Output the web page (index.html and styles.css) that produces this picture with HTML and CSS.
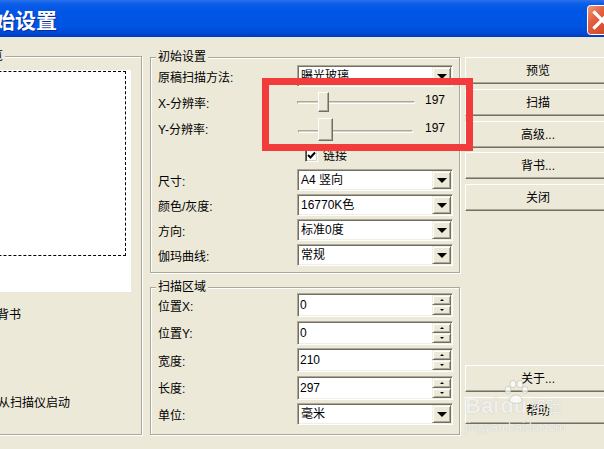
FILE: index.html
```html
<!DOCTYPE html>
<html lang="zh-CN">
<head>
<meta charset="utf-8">
<title>扫描设置</title>
<link rel="stylesheet" href="styles.css">
</head>
<body>
<div class="window">
  <div class="titlebar">
    <span class="title">始设置</span>
    <span class="close">
      <svg width="30" height="30" viewBox="0 0 30 30">
        <defs>
          <linearGradient id="cg" x1="0" y1="0" x2="1" y2="1">
            <stop offset="0" stop-color="#f09a80"/>
            <stop offset="0.35" stop-color="#e2603f"/>
            <stop offset="1" stop-color="#c2401f"/>
          </linearGradient>
        </defs>
        <rect x="0.5" y="0.5" width="29" height="29" rx="3" fill="url(#cg)" stroke="#ffffff"/>
        <path d="M7.5 7.5 L22.5 22.5 M22.5 7.5 L7.5 22.5" stroke="#ffffff" stroke-width="3.2" stroke-linecap="square"/>
      </svg>
    </span>
  </div>

  <div class="panes">
    <div class="group group-left">
      <span class="group-label label-left">预览</span>
      <div class="preview"><div class="marquee"></div></div>
      <div class="left-row row-endorse">背书</div>
      <div class="left-row row-start">从扫描仪启动</div>
    </div>

    <div class="middle">
      <div class="group group-init">
        <span class="group-label">初始设置</span>
        <div class="row row-first">
          <span class="lbl">原稿扫描方法:</span>
          <div class="field combo"><span class="val">曝光玻璃</span><span class="drop"><span class="tri"></span></span></div>
        </div>
        <div class="row row-slider-x">
          <span class="lbl">X-分辨率:</span>
          <div class="ctrl">
            <div class="slider slider-x"><span class="track"></span><span class="thumb thumb-x"></span></div>
            <span class="num num-x">197</span>
          </div>
        </div>
        <div class="row row-slider-y">
          <span class="lbl lbl-y">Y-分辨率:</span>
          <div class="ctrl">
            <div class="slider slider-y"><span class="track"></span><span class="thumb thumb-y"></span></div>
            <span class="num num-y">197</span>
          </div>
        </div>
        <div class="row row-check">
          <span class="lbl"></span>
          <div class="ctrl ctrl-check">
            <span class="checkbox"><svg width="9" height="9" viewBox="0 0 9 9"><path d="M1 4 L3.5 6.5 L8 1.5" fill="none" stroke="#000" stroke-width="2"/></svg></span>
            <span class="check-lbl">链接</span>
          </div>
        </div>
        <div class="row row-combo">
          <span class="lbl">尺寸:</span>
          <div class="field combo"><span class="val">A4 竖向</span><span class="drop"><span class="tri"></span></span></div>
        </div>
        <div class="row row-combo">
          <span class="lbl">颜色/灰度:</span>
          <div class="field combo"><span class="val">16770K色</span><span class="drop"><span class="tri"></span></span></div>
        </div>
        <div class="row row-combo">
          <span class="lbl">方向:</span>
          <div class="field combo"><span class="val">标准0度</span><span class="drop"><span class="tri"></span></span></div>
        </div>
        <div class="row row-combo">
          <span class="lbl">伽玛曲线:</span>
          <div class="field combo"><span class="val">常规</span><span class="drop"><span class="tri"></span></span></div>
        </div>
      </div>

      <div class="group group-area">
        <span class="group-label">扫描区域</span>
        <div class="row row-spin row-spin-first">
          <span class="lbl">位置X:</span>
          <div class="field spin"><span class="val val-num">0</span><span class="spin-btns"><span class="sbtn"><span class="up"></span></span><span class="sbtn"><span class="down"></span></span></span></div>
        </div>
        <div class="row row-spin">
          <span class="lbl">位置Y:</span>
          <div class="field spin"><span class="val val-num">0</span><span class="spin-btns"><span class="sbtn"><span class="up"></span></span><span class="sbtn"><span class="down"></span></span></span></div>
        </div>
        <div class="row row-spin">
          <span class="lbl">宽度:</span>
          <div class="field spin"><span class="val val-num">210</span><span class="spin-btns"><span class="sbtn"><span class="up"></span></span><span class="sbtn"><span class="down"></span></span></span></div>
        </div>
        <div class="row row-spin">
          <span class="lbl">长度:</span>
          <div class="field spin"><span class="val val-num">297</span><span class="spin-btns"><span class="sbtn"><span class="up"></span></span><span class="sbtn"><span class="down"></span></span></span></div>
        </div>
        <div class="row row-unit">
          <span class="lbl">单位:</span>
          <div class="field combo"><span class="val">毫米</span><span class="drop"><span class="tri"></span></span></div>
        </div>
      </div>
    </div>

    <div class="buttons">
      <div class="btn">预览</div>
      <div class="btn">扫描</div>
      <div class="btn">高级...</div>
      <div class="btn">背书...</div>
      <div class="btn">关闭</div>
      <div class="btn btn-about">关于...</div>
      <div class="btn">帮助</div>
    </div>
  </div>

  <div class="highlight"></div>

  <div class="watermark">
    <div class="wm-logo">
      <span class="wm-bai">Bai</span>
      <span class="wm-du">du
        <svg class="wm-paw" width="28" height="26" viewBox="0 0 28 26">
          <g fill="rgba(255,255,255,0.7)" stroke="rgba(150,150,150,0.35)" stroke-width="1">
            <ellipse cx="6" cy="11" rx="3" ry="3.6"/>
            <ellipse cx="11" cy="5" rx="3" ry="3.6"/>
            <ellipse cx="18" cy="5" rx="3" ry="3.6"/>
            <ellipse cx="23" cy="11" rx="3" ry="3.6"/>
            <path d="M8 22 C8 14 20 14 20 22 C20 25 8 25 8 22 Z"/>
          </g>
        </svg>
      </span>
      <span class="wm-jy">经验</span>
    </div>
    <div class="wm-url">jingyan.baidu.com</div>
  </div>
</div>
</body>
</html>
```

FILE: styles.css
```css
* {
  box-sizing: border-box;
}

html,
body {
  margin: 0;
  padding: 0;
  width: 604px;
  height: 449px;
  overflow: hidden;
  background: #ece9d8;
}

body {
  font-family: "Liberation Sans", "Noto Sans CJK SC", sans-serif;
  font-size: 12px;
  color: #000;
}

.window {
  position: relative;
  width: 622px;
  height: 449px;
  background: #ece9d8;
}

/* ---------- title bar ---------- */
.titlebar {
  height: 37px;
  display: flex;
  align-items: center;
  background: linear-gradient(to bottom,
      #2a72ec 0%,
      #0d5ee8 10%,
      #0056e6 30%,
      #0054e2 70%,
      #004bd6 88%,
      #003bbd 100%);
}

.title {
  margin-left: -6px;
  padding-top: 1px;
  color: #fff;
  font-family: "Noto Sans CJK SC", sans-serif;
  font-weight: bold;
  font-size: 21px;
  line-height: 24px;
  text-shadow: 1px 1px 0 #0b2a9a;
}

.close {
  align-self: flex-start;
  margin-top: 5px;
  margin-left: auto;
  margin-right: 5px;
  width: 30px;
  height: 30px;
  display: block;
}

.close svg {
  display: block;
}

/* ---------- panes ---------- */
.panes {
  display: flex;
  align-items: flex-start;
  margin-top: 19px;
}

.group {
  position: relative;
  border: 1px solid #aca899;
  box-shadow: inset 1px 1px 0 #fff, 1px 1px 0 #fff;
}

.group-label {
  position: absolute;
  top: -8px;
  left: 5px;
  padding: 0 2px;
  background: #ece9d8;
  line-height: 14px;
  white-space: nowrap;
}

.group-left {
  margin-left: -145px;
  width: 287px;
  height: 379px;
  display: flex;
  flex-direction: column;
}

.label-left {
  left: 121px;
}

.preview {
  margin: 13px 10px 0 10px;
  height: 222px;
  background: #fff;
  display: flex;
  flex-direction: column;
  align-items: stretch;
}

.marquee {
  margin: 1px 5px 0 8px;
  height: 185px;
  border: 1px dashed #000;
}

.left-row {
  padding-left: 141px;
  line-height: 14px;
  white-space: nowrap;
}

.row-endorse {
  margin-top: 16px;
}

.row-start {
  margin-top: 74px;
  padding-left: 142px;
}

/* ---------- middle column ---------- */
.middle {
  margin-left: 8px;
  margin-top: 1px;
  width: 310px;
  display: flex;
  flex-direction: column;
}

.group-init {
  height: 216px;
  padding-top: 7px;
}

.group-area {
  margin-top: 14px;
  height: 148px;
  padding-top: 5px;
}

.row {
  display: flex;
  align-items: center;
}

.lbl {
  width: 146px;
  padding-left: 7px;
  flex: none;
  white-space: nowrap;
}

.row-first {
  height: 22px;
}

.row-slider-x {
  height: 30px;
}

.row-slider-y {
  height: 28px;
}

.lbl-y {
  padding-bottom: 5px;
}

.row-check {
  height: 21px;
  margin-bottom: 3px;
}

.row-combo {
  height: 22px;
  margin-bottom: 3px;
}

.row-spin {
  height: 24px;
  margin-bottom: 3.5px;
}

.row-unit {
  height: 22px;
}

.ctrl {
  width: 156px;
  height: 100%;
  display: flex;
  align-items: center;
}

/* sunken field */
.field {
  width: 156px;
  display: flex;
  align-items: stretch;
  background: #fff;
  border: 1px solid;
  border-color: #aca899 #fff #fff #aca899;
  box-shadow: inset 1px 1px 0 #716f64, inset -1px -1px 0 #f1efe2;
  padding: 1px;
}

.combo {
  height: 22px;
}

.spin {
  height: 24px;
}

.val {
  flex: 1;
  padding-left: 2px;
  line-height: 18px;
  white-space: nowrap;
}

.val-num {
  padding-left: 1px;
  line-height: 20px;
}

.drop {
  width: 19px;
  flex: none;
  display: flex;
  align-items: center;
  justify-content: center;
  background: #ece9d8;
  border: 1px solid;
  border-color: #f1efe2 #716f64 #716f64 #f1efe2;
  box-shadow: inset 1px 1px 0 #fff, inset -1px -1px 0 #aca899;
}

.tri {
  width: 0;
  height: 0;
  border-left: 5px solid transparent;
  border-right: 5px solid transparent;
  border-top: 5px solid #000;
  margin-top: 1px;
}

.spin-btns {
  width: 19px;
  flex: none;
  display: flex;
  flex-direction: column;
}

.sbtn {
  flex: 1;
  display: flex;
  align-items: center;
  justify-content: center;
  background: #ece9d8;
  border: 1px solid;
  border-color: #f1efe2 #716f64 #716f64 #f1efe2;
  box-shadow: inset 1px 1px 0 #fff, inset -1px -1px 0 #aca899;
}

.up {
  width: 0;
  height: 0;
  border-left: 2.5px solid transparent;
  border-right: 2.5px solid transparent;
  border-bottom: 2.5px solid #000;
}

.down {
  width: 0;
  height: 0;
  border-left: 2.5px solid transparent;
  border-right: 2.5px solid transparent;
  border-top: 2.5px solid #000;
}

/* slider */
.slider {
  position: relative;
  height: 100%;
  display: flex;
  align-items: center;
}

.slider-x {
  width: 118px;
}

.slider-y {
  width: 115px;
  margin-left: 1px;
}

.track {
  width: 100%;
  height: 3px;
  border-top: 1px solid #aca899;
  border-left: 1px solid #aca899;
  border-bottom: 1px solid #fff;
  border-right: 1px solid #fff;
  background: #d8d4c4;
}

.thumb {
  position: absolute;
  background: #ece9d8;
  border: 1px solid;
  border-color: #fff #716f64 #716f64 #fff;
  box-shadow: inset -1px -1px 0 #aca899;
}

.thumb-x {
  left: 21px;
  top: 5px;
  width: 11px;
  height: 20px;
}

.thumb-y {
  left: 20px;
  top: 1px;
  width: 15px;
  height: 23px;
}

.num {
  font-size: 12px;
  line-height: 14px;
  margin-bottom: 4px;
}

.num-x {
  margin-left: 10px;
}

.num-y {
  margin-left: 12px;
  margin-bottom: 6px;
}

.ctrl-check {
  padding-left: 8px;
}

.checkbox {
  width: 13px;
  height: 13px;
  flex: none;
  display: flex;
  align-items: center;
  justify-content: center;
  background: #fff;
  border: 1px solid;
  border-color: #716f64 #fff #fff #716f64;
  box-shadow: inset 1px 1px 0 #404040, inset -1px -1px 0 #d4d0c8;
}

.checkbox svg {
  display: block;
}

.check-lbl {
  margin-left: 5px;
  line-height: 14px;
}

/* ---------- right buttons ---------- */
.buttons {
  margin-left: 5px;
  margin-top: 1px;
  width: 146px;
  height: 367px;
  display: flex;
  flex-direction: column;
  gap: 4.75px;
}

.btn {
  height: 27px;
  flex: none;
  display: flex;
  align-items: center;
  justify-content: center;
  background: #ece9d8;
  border: 1px solid;
  border-color: #fff #716f64 #716f64 #fff;
  box-shadow: inset -1px -1px 0 #aca899;
  line-height: 14px;
  padding-top: 1px;
}

.btn-about {
  margin-top: auto;
}

/* ---------- annotation overlay ---------- */
.highlight {
  position: absolute;
  left: 262px;
  top: 78px;
  width: 211px;
  height: 73px;
  border: 7px solid #f23b3b;
}

/* ---------- watermark overlay ---------- */
.watermark {
  position: absolute;
  left: 465px;
  top: 386px;
  width: 120px;
  color: rgba(255, 255, 255, 0.8);
  text-shadow: 0 0 1px rgba(120, 120, 120, 0.45);
  pointer-events: none;
}

.wm-logo {
  display: flex;
  align-items: flex-end;
  height: 32px;
}

.wm-bai,
.wm-du {
  font-family: "Liberation Sans", sans-serif;
  font-weight: bold;
  font-size: 22px;
  line-height: 24px;
}

.wm-du {
  position: relative;
  margin-left: 1px;
}

.wm-paw {
  position: absolute;
  left: 2px;
  top: -15px;
}

.wm-jy {
  font-family: "Noto Sans CJK SC", sans-serif;
  font-size: 15px;
  line-height: 20px;
  margin-left: 4px;
  margin-bottom: 2px;
}

.wm-url {
  font-family: "Liberation Sans", sans-serif;
  font-size: 12.5px;
  line-height: 14px;
  margin-top: 2px;
}
```
